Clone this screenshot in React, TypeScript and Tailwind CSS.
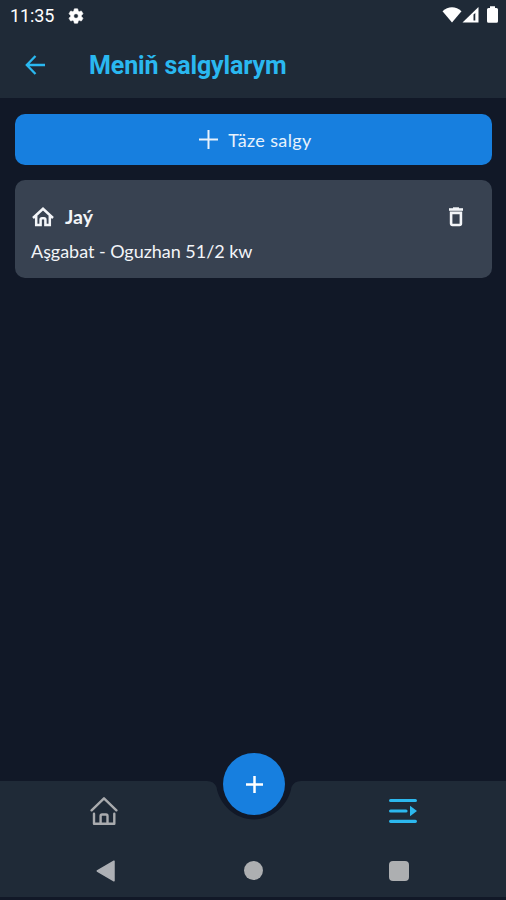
import React from "react";

function StatusBar() {
  return (
    <div className="flex h-8 items-center justify-between pr-[8px] pl-[10px] text-white">
      <div className="flex items-center gap-[13px]">
        <span className="font-['Roboto',sans-serif] text-[18px] leading-8 tracking-[-0.1px] whitespace-nowrap">11:35</span>
        <svg className="mb-px" width="18" height="18" viewBox="0 0 24 24" fill="currentColor" stroke="currentColor" strokeWidth="0.8">
          <path d="M19.14 12.94c.04-.3.06-.61.06-.94 0-.32-.02-.64-.07-.94l2.03-1.58a.49.49 0 0 0 .12-.61l-1.92-3.32a.49.49 0 0 0-.59-.22l-2.39.96a7 7 0 0 0-1.62-.94l-.36-2.54a.48.48 0 0 0-.48-.41h-3.84a.47.47 0 0 0-.47.41l-.36 2.54c-.59.24-1.13.57-1.62.94l-2.39-.96a.48.48 0 0 0-.59.22L2.74 8.87a.47.47 0 0 0 .12.61l2.03 1.58a6 6 0 0 0-.02 1.88l-2.03 1.58a.49.49 0 0 0-.12.61l1.92 3.32c.12.22.37.29.59.22l2.39-.96c.5.38 1.03.7 1.62.94l.36 2.54c.05.24.24.41.48.41h3.84c.24 0 .44-.17.47-.41l.36-2.54a7 7 0 0 0 1.62-.94l2.39.96c.22.08.47 0 .59-.22l1.92-3.32a.47.47 0 0 0-.12-.61zM12 15.1a3.1 3.1 0 1 1 0-6.2 3.1 3.1 0 0 1 0 6.2z" />
        </svg>
      </div>
      <div className="flex h-4 items-center pb-[3px]">
        <svg width="20" height="16" viewBox="0 0 20 16" fill="currentColor">
          <path d="M0.5 4.2C6 -1 14 -1 19.5 4.2L10 15.5Z" />
        </svg>
        <svg width="17" height="16" viewBox="0 0 17 16" fill="currentColor">
          <path d="M0.5 15.5L16.5 0V15.5Z" />
          <path d="M11.5 7.5V13.5H13.3V6Z" fill="#1f2a37" />
        </svg>
        <svg className="ml-2" width="11" height="17" viewBox="0 0 11 17" fill="currentColor">
          <path d="M3 0.3H8V2H9.5Q11 2 11 3.5V15.2Q11 16.7 9.5 16.7H1.5Q0 16.7 0 15.2V3.5Q0 2 1.5 2H3Z" />
        </svg>
      </div>
    </div>
  );
}

function Header() {
  return (
    <header className="h-[98px] shrink-0 bg-[#1f2a37]">
      <StatusBar />
      <div className="flex h-[66px] items-center pl-[25px] text-[#2ab8f0]">
        <svg width="21" height="20" viewBox="0 0 21 20" fill="none" stroke="currentColor" strokeWidth="2.3">
          <path d="M20 10H2.5M10.5 1L1.8 10L10.5 19" />
        </svg>
        <h1 className="mt-0.5 ml-[43px] font-['Roboto',sans-serif] text-[25px] leading-8 font-bold tracking-[-0.13px] whitespace-nowrap">
          Meniň salgylarym
        </h1>
      </div>
    </header>
  );
}

function AddressCard() {
  return (
    <section className="mt-[15px] h-[98px] rounded-[10px] bg-[#384251] pt-[24px] pr-[28px] pl-[16px] text-[#f3f5f8]">
      <div className="flex h-[26px] items-center">
        <svg className="mb-px ml-px" width="22" height="20" viewBox="0 0 22 20" fill="none" stroke="currentColor" strokeWidth="2.5">
          <path d="M1 11L11 1.8L21 11" />
          <path d="M4.2 9V18H8.6V12.7Q8.6 11.2 10 11.2H12Q13.4 11.2 13.4 12.7V18H17.8V9" />
        </svg>
        <h2 className="ml-[11px] font-['Lato',sans-serif] text-[19.5px] leading-[26px] font-bold tracking-[0.1px]">Jaý</h2>
        <svg className="mb-px ml-auto" width="16" height="20" viewBox="0 0 16 20" fill="none" stroke="currentColor" strokeWidth="2.6">
          <path d="M1 2.5H15" />
          <path d="M5 1.6H11" />
          <path d="M3.1 5.9H12.9V16.6Q12.9 18 11.5 18H4.5Q3.1 18 3.1 16.6Z" />
        </svg>
      </div>
      <p className="mt-[9px] font-['Lato',sans-serif] text-[18px] leading-6 tracking-[-0.03px] whitespace-nowrap">
        Aşgabat - Oguzhan 51/2 kw
      </p>
    </section>
  );
}

function BottomBar() {
  return (
    <footer className="relative h-[119px] shrink-0">
      <svg className="absolute inset-0" width="506" height="119" viewBox="0 0 506 119">
        <path d="M0 0H207Q214 0 216.5 6C219 23 235 38.5 254 38.5S289 23 291.5 6Q294 0 301 0H506V116H0Z" fill="#1f2a37" />
      </svg>
      <button className="absolute top-[-28px] left-[223px] flex size-[62px] items-center justify-center rounded-full bg-[#177fdf] text-white">
        <svg width="17" height="17" viewBox="0 0 17 17" stroke="currentColor" strokeWidth="2.5">
          <path d="M8.5 0V17M0 8.5H17" />
        </svg>
      </button>
      <div className="relative flex h-[60px] items-center justify-between pr-[89px] pl-[90px]">
        <svg width="28" height="30" viewBox="0 0 28 30" fill="none" stroke="#a9abae" strokeWidth="2.4" strokeLinecap="round" strokeLinejoin="round">
          <path d="M1.6 14.3L14 2.3L26.4 14.3" />
          <path d="M4 17.7V27.8H24.3V17.7" />
          <path d="M10.6 27.8V20Q10.6 18.5 12.1 18.5H16Q17.5 18.5 17.5 20V27.8" />
        </svg>
        <svg width="28" height="26" viewBox="0 0 28 26" fill="none" stroke="#2cb8ee" strokeWidth="3.2" strokeLinecap="round">
          <path d="M1.6 2.5H26.4M1.6 13H17M1.6 23.3H26.4" />
          <path d="M21 7.8L28 13L21 18.2Z" fill="#2cb8ee" stroke="none" />
        </svg>
      </div>
      <div className="relative flex h-[59px] items-start justify-between pt-[19px] pr-[97px] pl-[96px]">
        <svg width="20" height="22" viewBox="0 0 20 22" fill="#adb0b5" stroke="#adb0b5" strokeWidth="1.5" strokeLinejoin="round">
          <path d="M1.3 11L18 1.2V20.8Z" />
        </svg>
        <div className="mt-px ml-px size-[19px] rounded-full bg-[#adafb1]" />
        <div className="mt-px size-5 rounded-sm bg-[#adafb1]" />
      </div>
    </footer>
  );
}

export default function App() {
  return (
    <div className="flex h-[900px] w-[506px] flex-col overflow-hidden bg-[#111827]">
      <Header />
      <main className="flex-1 pt-4 pr-[14px] pl-[15px]">
        <button className="flex h-[51px] w-full items-center justify-center rounded-[10px] bg-[#177fdf] pl-1 text-[#e8f2fc]">
          <svg width="19" height="19" viewBox="0 0 19 19" stroke="currentColor" strokeWidth="2">
            <path d="M9.5 0V19M0 9.5H19" />
          </svg>
          <span className="mt-px ml-[10px] font-['Lato',sans-serif] text-[18px] leading-6 tracking-[0.38px] whitespace-nowrap">Täze salgy</span>
        </button>
        <AddressCard />
      </main>
      <BottomBar />
    </div>
  );
}
